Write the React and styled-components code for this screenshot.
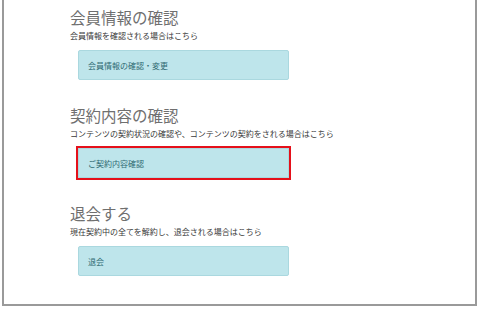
import React from "react";
import styled, { createGlobalStyle } from "styled-components";

const Global = createGlobalStyle`
  html, body { margin: 0; padding: 0; background: #fff; }
  body { font-family: "Noto Sans CJK JP", "Noto Sans", sans-serif; }
  * { box-sizing: border-box; }
`;

const Frame = styled.div`
  margin-left: 2px;
  width: 475px;
  height: 306px;
  border: 2px solid #9a9a9a;
  border-top: none;
  padding: 7px 0 0 66px;
  display: flex;
  flex-direction: column;
  gap: 25px;
`;

const Section = styled.section`
  display: flex;
  flex-direction: column;
  align-items: flex-start;
`;

const Heading = styled.h2`
  margin: 0;
  font-size: 15.5px;
  line-height: 21px;
  font-weight: 400;
  color: #6f6f6f;
`;

const Note = styled.p`
  margin: 2px 0 0;
  font-size: 8px;
  line-height: 12px;
  color: #3a3a3a;
`;

const Action = styled.a`
  display: flex;
  align-items: center;
  margin: 8px 0 0 8px;
  width: 211px;
  height: 30px;
  padding-left: 9px;
  background: #bee5eb;
  border: 1px solid #aad8df;
  border-radius: ${(p) => (p.$highlight ? "0" : "2px")};
  font-size: 8px;
  color: #2f6a72;
  text-decoration: none;
  outline: ${(p) => (p.$highlight ? "2px solid #e5101a" : "none")};
  outline-offset: 0;
`;

const sections = [
  {
    title: "会員情報の確認",
    note: "会員情報を確認される場合はこちら",
    action: "会員情報の確認・変更",
  },
  {
    title: "契約内容の確認",
    note: "コンテンツの契約状況の確認や、コンテンツの契約をされる場合はこちら",
    action: "ご契約内容確認",
    highlight: true,
  },
  {
    title: "退会する",
    note: "現在契約中の全てを解約し、退会される場合はこちら",
    action: "退会",
  },
];

export default function App() {
  return (
    <>
      <Global />
      <Frame>
        {sections.map((s) => (
          <Section key={s.title}>
            <Heading>{s.title}</Heading>
            <Note>{s.note}</Note>
            <Action href="#" $highlight={s.highlight}>
              {s.action}
            </Action>
          </Section>
        ))}
      </Frame>
    </>
  );
}
